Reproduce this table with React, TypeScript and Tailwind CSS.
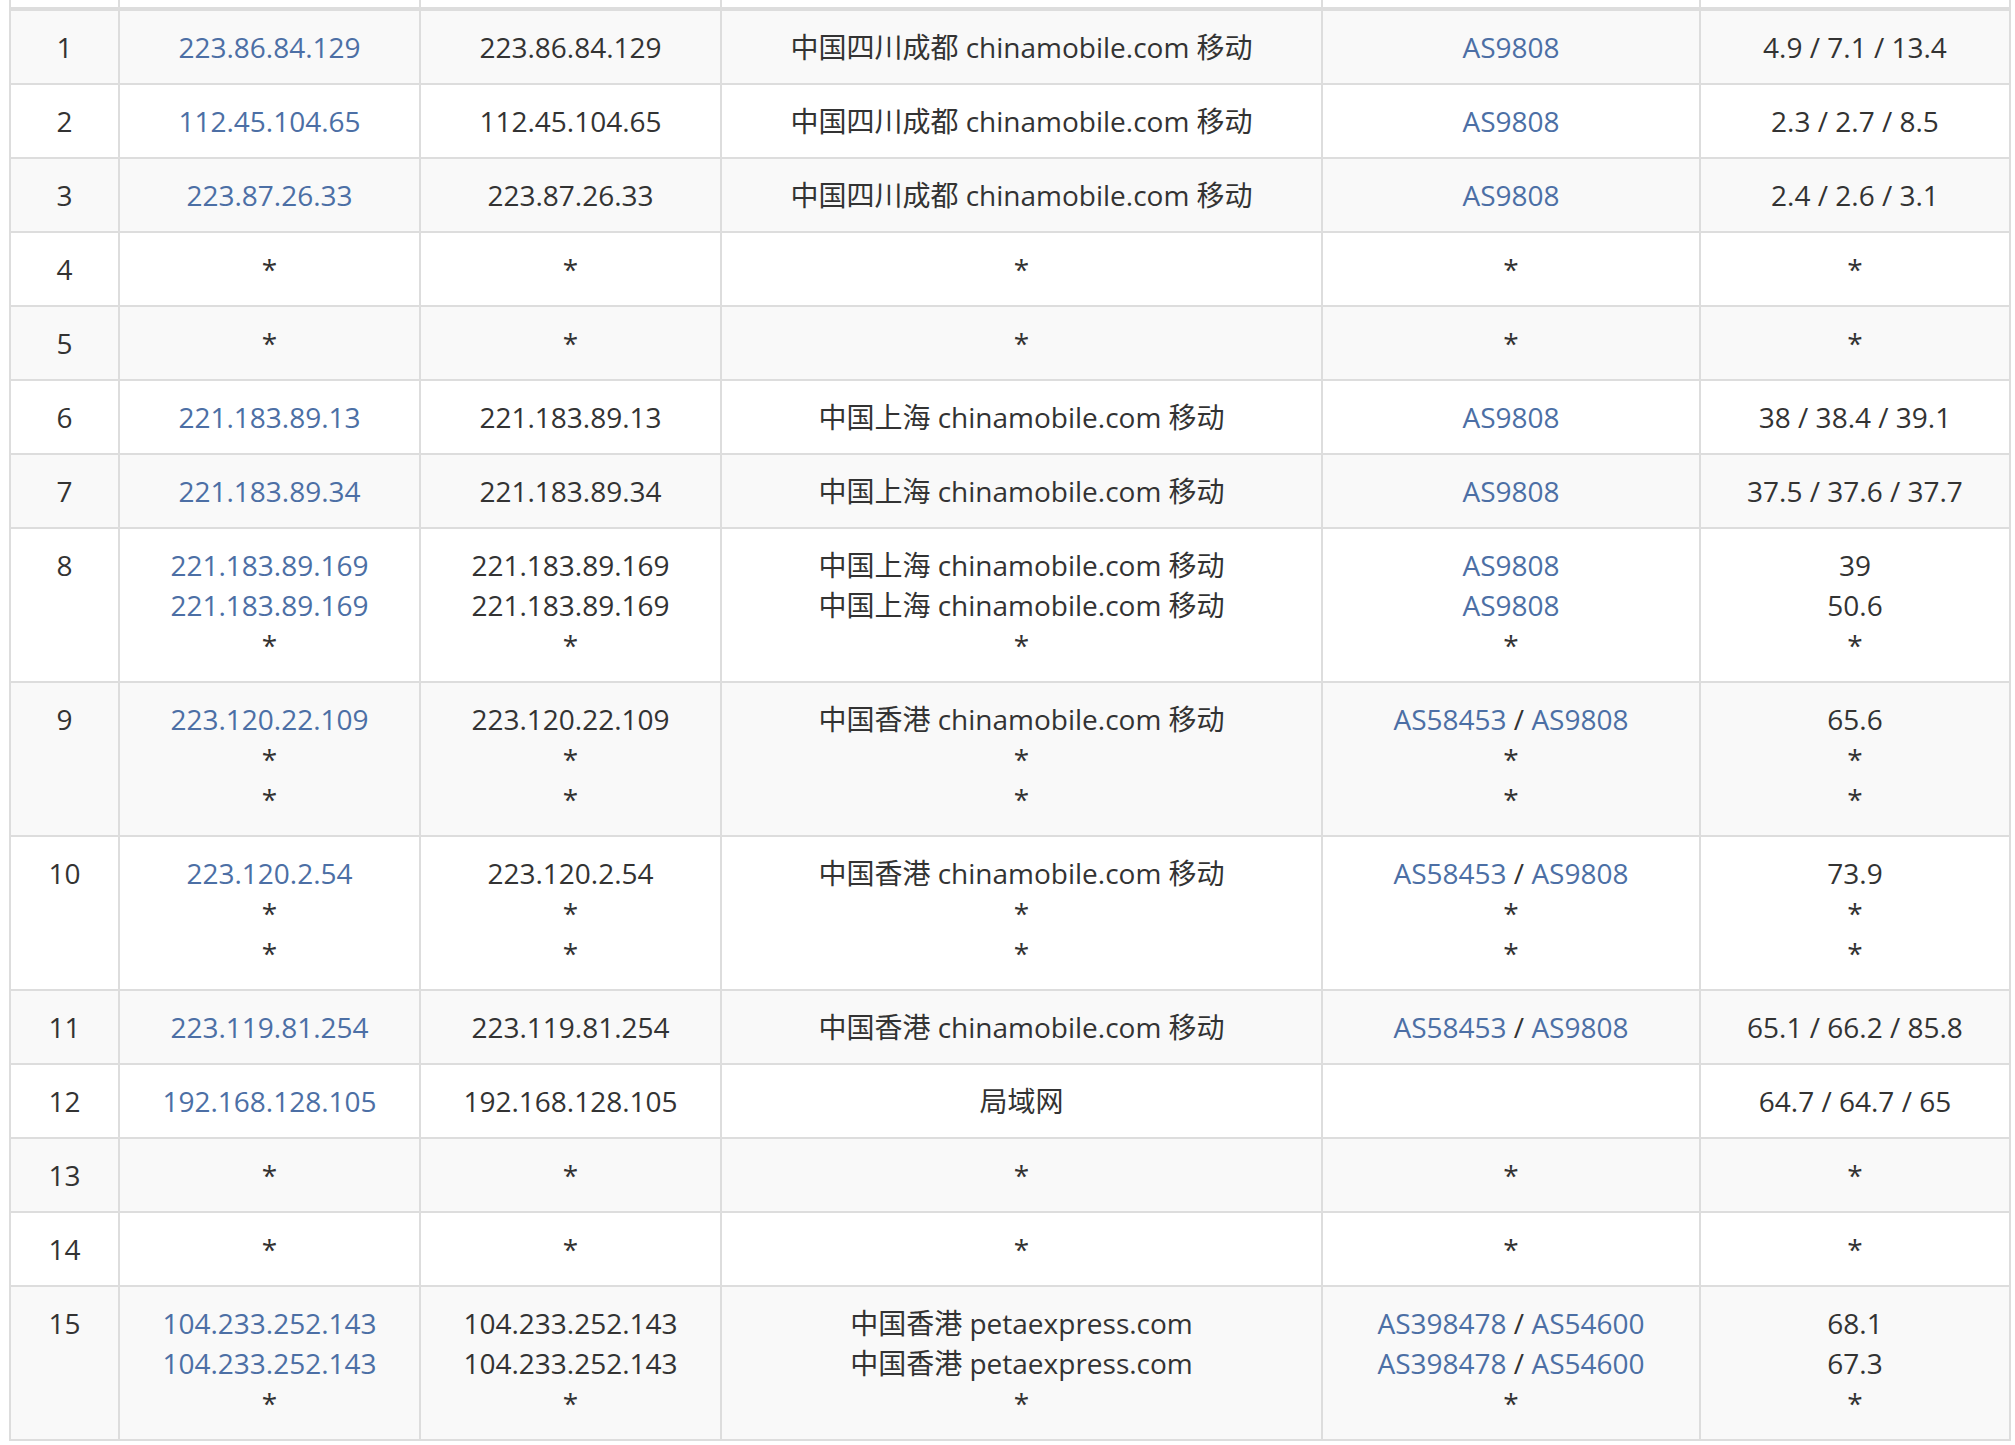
import React from 'react';

type Hop = {
  n: number;
  // one entry per probe line; empty object = timed out (*)
  lines: { ip?: string; geo?: string; asns?: string[]; rtt?: string }[];
};

const cm = (city: string) => `中国${city} chinamobile.com 移动`;

const hops: Hop[] = [
  { n: 1, lines: [{ ip: '223.86.84.129', geo: cm('四川成都'), asns: ['AS9808'], rtt: '4.9 / 7.1 / 13.4' }] },
  { n: 2, lines: [{ ip: '112.45.104.65', geo: cm('四川成都'), asns: ['AS9808'], rtt: '2.3 / 2.7 / 8.5' }] },
  { n: 3, lines: [{ ip: '223.87.26.33', geo: cm('四川成都'), asns: ['AS9808'], rtt: '2.4 / 2.6 / 3.1' }] },
  { n: 4, lines: [{}] },
  { n: 5, lines: [{}] },
  { n: 6, lines: [{ ip: '221.183.89.13', geo: cm('上海'), asns: ['AS9808'], rtt: '38 / 38.4 / 39.1' }] },
  { n: 7, lines: [{ ip: '221.183.89.34', geo: cm('上海'), asns: ['AS9808'], rtt: '37.5 / 37.6 / 37.7' }] },
  {
    n: 8,
    lines: [
      { ip: '221.183.89.169', geo: cm('上海'), asns: ['AS9808'], rtt: '39' },
      { ip: '221.183.89.169', geo: cm('上海'), asns: ['AS9808'], rtt: '50.6' },
      {},
    ],
  },
  {
    n: 9,
    lines: [{ ip: '223.120.22.109', geo: cm('香港'), asns: ['AS58453', 'AS9808'], rtt: '65.6' }, {}, {}],
  },
  {
    n: 10,
    lines: [{ ip: '223.120.2.54', geo: cm('香港'), asns: ['AS58453', 'AS9808'], rtt: '73.9' }, {}, {}],
  },
  { n: 11, lines: [{ ip: '223.119.81.254', geo: cm('香港'), asns: ['AS58453', 'AS9808'], rtt: '65.1 / 66.2 / 85.8' }] },
  { n: 12, lines: [{ ip: '192.168.128.105', geo: '局域网', asns: [], rtt: '64.7 / 64.7 / 65' }] },
  { n: 13, lines: [{}] },
  { n: 14, lines: [{}] },
  {
    n: 15,
    lines: [
      { ip: '104.233.252.143', geo: '中国香港 petaexpress.com', asns: ['AS398478', 'AS54600'], rtt: '68.1' },
      { ip: '104.233.252.143', geo: '中国香港 petaexpress.com', asns: ['AS398478', 'AS54600'], rtt: '67.3' },
      {},
    ],
  },
];

const td = 'border-2 border-[#ddd] px-4 py-4 text-center align-top';
const link = 'text-[#4c6fa5]';

function Star() {
  return <div>*</div>;
}

export default function App() {
  return (
    <div
      className="min-h-screen bg-white pl-[9px] text-[28px] leading-[40px] text-[#333]"
      style={{ fontFamily: '"Open Sans", "Noto Sans CJK SC", sans-serif' }}
    >
      <table className="w-[2000px] table-fixed border-collapse">
        <colgroup>
          <col className="w-[109px]" />
          <col className="w-[301px]" />
          <col className="w-[301px]" />
          <col className="w-[601px]" />
          <col className="w-[378px]" />
          <col className="w-[310px]" />
        </colgroup>
        <thead>
          <tr>
            {[0, 1, 2, 3, 4, 5].map((i) => (
              <th key={i} className="h-[9px] border-x-2 border-b-4 border-t-0 border-[#ddd] p-0" />
            ))}
          </tr>
        </thead>
        <tbody>
          {hops.map((h, ri) => (
            <tr key={h.n} className={ri % 2 === 0 ? 'bg-[#f9f9f9]' : 'bg-white'}>
              <td className={td}>{h.n}</td>
              <td className={td}>
                {h.lines.map((l, i) => (l.ip ? <div key={i} className={link}>{l.ip}</div> : <Star key={i} />))}
              </td>
              <td className={td}>
                {h.lines.map((l, i) => (l.ip ? <div key={i}>{l.ip}</div> : <Star key={i} />))}
              </td>
              <td className={td}>
                {h.lines.map((l, i) => (l.geo ? <div key={i}>{l.geo}</div> : <Star key={i} />))}
              </td>
              <td className={td}>
                {h.lines.map((l, i) =>
                  l.asns ? (
                    <div key={i} className="min-h-[40px]">
                      {l.asns.map((a, j) => (
                        <React.Fragment key={a}>
                          {j > 0 && ' / '}
                          <span className={link}>{a}</span>
                        </React.Fragment>
                      ))}
                    </div>
                  ) : (
                    <Star key={i} />
                  )
                )}
              </td>
              <td className={td}>
                {h.lines.map((l, i) => (l.rtt ? <div key={i}>{l.rtt}</div> : <Star key={i} />))}
              </td>
            </tr>
          ))}
        </tbody>
      </table>
    </div>
  );
}
